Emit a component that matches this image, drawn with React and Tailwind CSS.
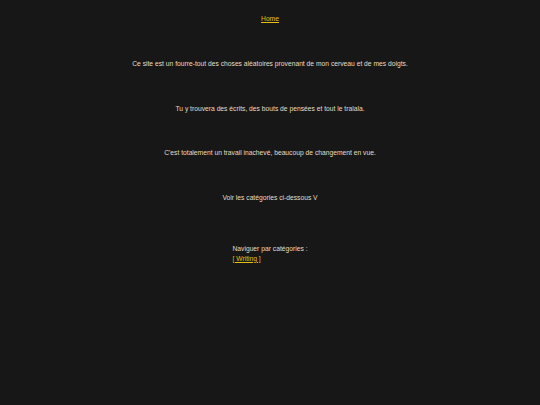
import React from 'react';

const lines = [
  'Ce site est un fourre-tout des choses aléatoires provenant de mon cerveau et de mes doigts.',
  'Tu y trouvera des écrits, des bouts de pensées et tout le tralala.',
  "C'est totalement un travail inachevé, beaucoup de changement en vue.",
  'Voir les catégories ci-dessous V',
];

const App = () => {
  return (
    <div className="min-h-screen bg-[#171717] text-[#e6dcc4] antialiased font-['Liberation_Sans',Arial,sans-serif] text-[6.73px] leading-[10px]">
      <div className="flex flex-col items-center pt-[14px]">
        <a href="#" className="text-[#e3c10c] underline">Home</a>
        <div className="flex flex-col items-center gap-[34.5px] mt-[35px]">
          {lines.map((line, i) => (
            <p key={i} className="text-center">{line}</p>
          ))}
        </div>
        <div className="mt-[41px] flex flex-col items-start">
          <span>Naviguer par catégories :</span>
          <a href="#" className="text-[#e3c10c] underline">[ Writing ]</a>
        </div>
      </div>
    </div>
  );
};

export default App;
